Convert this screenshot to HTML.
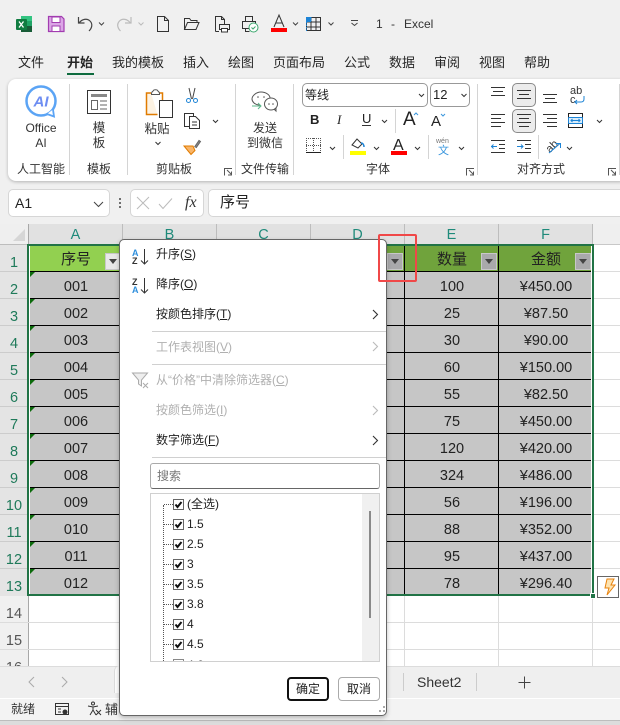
<!DOCTYPE html>
<html><head><meta charset="utf-8">
<style>
html,body{margin:0;padding:0}
body{width:620px;height:725px;overflow:hidden;position:relative;background:#f0f0f0;font-family:"Liberation Sans","Noto Sans CJK SC",sans-serif;color:#222}
div,span{position:absolute;box-sizing:border-box}
.t{white-space:nowrap;font-size:12px;line-height:16px}
.c{text-align:center}
.tab{top:55px;font-size:13px;line-height:16px;white-space:nowrap;color:#262626}
.gl{top:161px;font-size:12px;line-height:16px;white-space:nowrap;color:#333}
.cell{height:26px;line-height:28px;margin-top:1px;padding-left:1px;text-align:center;font-size:14.5px;color:#222;white-space:nowrap}
.hl{background:#000;height:1px;left:30px;width:561px}
.vl{background:#000;width:1px;top:245px;height:350px}
.rn{left:0;width:28px;text-align:center;font-size:14.5px;height:27px;line-height:27px;margin-top:1px;color:#1f7a5a}
.ch{top:224px;height:20px;width:94px;text-align:center;font-size:14.5px;line-height:23px;color:#1f8a7a;background:#e1e1e1;border-right:1px solid #bdbdbd}
.m{left:156px;font-size:12px;line-height:16px;white-space:nowrap;color:#222}
.g{color:#b0b0b0}
.li{left:187px;font-size:12px;line-height:16px;white-space:nowrap;color:#222}
.cb{left:173px;width:11px;height:11px;border:1px solid #666;background:#fff}
.fb{width:16px;height:17px;top:253px;background:#a9a9ab;border:1px solid #c8c8c8}
.fb:after{content:"";position:absolute;left:3px;top:5px;border:4px solid transparent;border-top:5px solid #444}
</style></head><body>

<!-- ribbon card -->
<div style="left:8px;top:79px;width:620px;height:102px;background:#fff;border-radius:8px;box-shadow:0 1px 3px rgba(0,0,0,.25)"></div>

<!-- tabs -->
<div class="tab" style="left:18px">文件</div>
<div class="tab" style="left:67px;font-weight:bold">开始</div>
<div style="left:67px;top:73px;width:27px;height:2px;background:#0e6b3e"></div>
<div class="tab" style="left:112px">我的模板</div>
<div class="tab" style="left:183px">插入</div>
<div class="tab" style="left:228px">绘图</div>
<div class="tab" style="left:273px">页面布局</div>
<div class="tab" style="left:344px">公式</div>
<div class="tab" style="left:389px">数据</div>
<div class="tab" style="left:434px">审阅</div>
<div class="tab" style="left:479px">视图</div>
<div class="tab" style="left:524px">帮助</div>
<div class="t" style="left:376px;top:16px;font-size:12px;color:#333">1</div>
<div class="t" style="left:391px;top:16px;font-size:12px;color:#333">-</div>
<div class="t" style="left:404px;top:16px;font-size:12px;color:#333">Excel</div>

<!-- ribbon text -->
<div class="t c" style="left:16px;width:50px;top:121px;line-height:15px;color:#333">Office<br>AI</div>
<div class="t c" style="left:86px;width:26px;top:121px;line-height:15px;color:#333;font-size:12.5px">模<br>板</div>
<div class="t c" style="left:140px;width:34px;top:121px;color:#333;font-size:12.5px">粘贴</div>
<div class="t c" style="left:240px;width:50px;top:121px;line-height:15px;color:#333;font-size:12px">发送<br>到微信</div>
<div class="gl" style="left:17px">人工智能</div>
<div class="gl" style="left:87px">模板</div>
<div class="gl" style="left:156px">剪贴板</div>
<div class="gl" style="left:241px">文件传输</div>
<div class="gl" style="left:366px">字体</div>
<div class="gl" style="left:517px">对齐方式</div>

<!-- font boxes -->
<div style="left:302px;top:83px;width:126px;height:24px;border:1px solid #999;border-radius:5px"></div>
<div style="left:430px;top:83px;width:40px;height:24px;border:1px solid #999;border-radius:5px"></div>
<div class="t" style="left:305px;top:87px;font-size:12px">等线</div>
<div class="t" style="left:433px;top:87px;font-size:13px">12</div>
<div class="t" style="left:310px;top:112px;font-size:13px;font-weight:bold">B</div>
<div class="t" style="left:337px;top:112px;font-size:13px;font-style:italic;font-family:'Liberation Serif',serif">I</div>
<div class="t" style="left:362px;top:111px;font-size:13px">U</div>
<div class="t" style="left:403px;top:109px;font-size:19px;line-height:22px">A</div>
<div class="t" style="left:431px;top:113px;font-size:15px;line-height:18px">A</div>
<div class="t" style="left:393px;top:137px;font-size:16px;line-height:18px">A</div>
<div class="t" style="left:436px;top:137px;font-size:7px;line-height:9px;color:#777">wén</div>
<div class="t" style="left:438px;top:145px;font-size:11px;line-height:12px;color:#3a96dd">文</div>
<div class="t" style="left:570px;top:87px;font-size:11px;line-height:9px;color:#333">ab<br>c</div>
<!-- active align buttons -->
<div style="left:512px;top:83px;width:24px;height:24px;background:#ececec;border:1px solid #8a8a8a;border-radius:5px"></div>
<div style="left:512px;top:109px;width:24px;height:24px;background:#ececec;border:1px solid #8a8a8a;border-radius:5px"></div>

<!-- formula bar -->
<div style="left:8px;top:189px;width:102px;height:28px;background:#fff;border:1px solid #d6d6d6;border-radius:5px"></div>
<div class="t" style="left:15px;top:195px;font-size:14px">A1</div>
<div style="left:130px;top:189px;width:74px;height:28px;background:#fff;border:1px solid #d6d6d6;border-radius:5px"></div>
<div class="t" style="left:185px;top:194px;font-size:16px;line-height:18px;font-style:italic;font-family:'Liberation Serif',serif;color:#333">fx</div>
<div style="left:208px;top:189px;width:420px;height:28px;background:#fff;border:1px solid #d6d6d6;border-radius:5px"></div>
<div class="t" style="left:220px;top:194px;font-size:15px;line-height:18px">序号</div>

<!-- sheet area -->
<div style="left:0;top:224px;width:620px;height:442px;background:#fff"></div>
<div style="left:0;top:224px;width:620px;height:20px;background:#efefef"></div>
<div style="left:0;top:244px;width:28px;height:422px;background:#f0f0f0"></div>
<div style="left:594px;top:244px;width:26px;height:1px;background:#c8c8c8"></div>
<div style="left:0;top:244px;width:593px;height:1px;background:#bdbdbd"></div>
<div style="left:28px;top:224px;width:1px;height:442px;background:#a8a8a8"></div>
<div class="ch" style="left:29px">A</div>
<div class="ch" style="left:123px">B</div>
<div class="ch" style="left:217px">C</div>
<div class="ch" style="left:311px">D</div>
<div class="ch" style="left:405px">E</div>
<div class="ch" style="left:499px">F</div>
<!-- row header -->
<div style="left:0;top:245px;width:28px;height:351px;background:#e4e4e4"></div>
<div class="rn" style="top:249px">1</div><div class="rn" style="top:276px">2</div><div class="rn" style="top:303px">3</div><div class="rn" style="top:330px">4</div><div class="rn" style="top:357px">5</div><div class="rn" style="top:384px">6</div><div class="rn" style="top:411px">7</div><div class="rn" style="top:438px">8</div><div class="rn" style="top:465px">9</div><div class="rn" style="top:492px">10</div><div class="rn" style="top:519px">11</div><div class="rn" style="top:546px">12</div><div class="rn" style="top:573px">13</div>
<div class="rn" style="top:600px;color:#555">14</div><div class="rn" style="top:627px;color:#555">15</div><div class="rn" style="top:654px;color:#555">16</div>
<!-- grid -->
<div style="left:0;top:271px;width:28px;height:1px;background:#ccc"></div><div style="left:0;top:298px;width:28px;height:1px;background:#ccc"></div><div style="left:0;top:325px;width:28px;height:1px;background:#ccc"></div><div style="left:0;top:352px;width:28px;height:1px;background:#ccc"></div><div style="left:0;top:379px;width:28px;height:1px;background:#ccc"></div><div style="left:0;top:406px;width:28px;height:1px;background:#ccc"></div><div style="left:0;top:433px;width:28px;height:1px;background:#ccc"></div><div style="left:0;top:460px;width:28px;height:1px;background:#ccc"></div><div style="left:0;top:487px;width:28px;height:1px;background:#ccc"></div><div style="left:0;top:514px;width:28px;height:1px;background:#ccc"></div><div style="left:0;top:541px;width:28px;height:1px;background:#ccc"></div><div style="left:0;top:568px;width:28px;height:1px;background:#ccc"></div><div style="left:0;top:622px;width:620px;height:1px;background:#dcdcdc"></div><div style="left:0;top:649px;width:620px;height:1px;background:#dcdcdc"></div>
<div style="left:404px;top:596px;width:1px;height:70px;background:#dcdcdc"></div><div style="left:498px;top:596px;width:1px;height:70px;background:#dcdcdc"></div><div style="left:592px;top:596px;width:1px;height:70px;background:#dcdcdc"></div>
<div style="left:593px;top:271px;width:27px;height:1px;background:#dcdcdc"></div><div style="left:593px;top:298px;width:27px;height:1px;background:#dcdcdc"></div><div style="left:593px;top:325px;width:27px;height:1px;background:#dcdcdc"></div><div style="left:593px;top:352px;width:27px;height:1px;background:#dcdcdc"></div><div style="left:593px;top:379px;width:27px;height:1px;background:#dcdcdc"></div><div style="left:593px;top:406px;width:27px;height:1px;background:#dcdcdc"></div><div style="left:593px;top:433px;width:27px;height:1px;background:#dcdcdc"></div><div style="left:593px;top:460px;width:27px;height:1px;background:#dcdcdc"></div><div style="left:593px;top:487px;width:27px;height:1px;background:#dcdcdc"></div><div style="left:593px;top:514px;width:27px;height:1px;background:#dcdcdc"></div><div style="left:593px;top:541px;width:27px;height:1px;background:#dcdcdc"></div><div style="left:593px;top:568px;width:27px;height:1px;background:#dcdcdc"></div>

<!-- data -->
<div style="left:30px;top:246px;width:561px;height:348px;background:#c6c6c6"></div>
<div style="left:30px;top:246px;width:93px;height:25px;background:#92d050"></div>
<div style="left:123px;top:246px;width:468px;height:25px;background:#70a33c"></div>
<div class="vl" style="left:122px"></div><div class="vl" style="left:216px"></div><div class="vl" style="left:310px"></div><div class="vl" style="left:404px"></div><div class="vl" style="left:498px"></div>
<div class="hl" style="top:271px"></div><div class="hl" style="top:298px"></div><div class="hl" style="top:325px"></div><div class="hl" style="top:352px"></div><div class="hl" style="top:379px"></div><div class="hl" style="top:406px"></div><div class="hl" style="top:433px"></div><div class="hl" style="top:460px"></div><div class="hl" style="top:487px"></div><div class="hl" style="top:514px"></div><div class="hl" style="top:541px"></div><div class="hl" style="top:568px"></div>

<div class="cell" style="left:29px;width:93px;top:245px;font-size:15px">序号</div>
<div class="cell" style="left:405px;width:93px;top:245px;font-size:15px">数量</div>
<div class="cell" style="left:499px;width:93px;top:245px;font-size:15px">金额</div>
<div class="fb" style="left:105px;background:#e8e8e8"></div>
<div class="fb" style="left:387px"></div><div class="fb" style="left:481px"></div><div class="fb" style="left:575px"></div>

<div class="cell" style="left:29px;width:93px;top:272px">001</div><div class="cell" style="left:405px;width:93px;top:272px">100</div><div class="cell" style="left:499px;width:93px;top:272px">¥450.00</div>
<div class="cell" style="left:29px;width:93px;top:299px">002</div><div class="cell" style="left:405px;width:93px;top:299px">25</div><div class="cell" style="left:499px;width:93px;top:299px">¥87.50</div>
<div class="cell" style="left:29px;width:93px;top:326px">003</div><div class="cell" style="left:405px;width:93px;top:326px">30</div><div class="cell" style="left:499px;width:93px;top:326px">¥90.00</div>
<div class="cell" style="left:29px;width:93px;top:353px">004</div><div class="cell" style="left:405px;width:93px;top:353px">60</div><div class="cell" style="left:499px;width:93px;top:353px">¥150.00</div>
<div class="cell" style="left:29px;width:93px;top:380px">005</div><div class="cell" style="left:405px;width:93px;top:380px">55</div><div class="cell" style="left:499px;width:93px;top:380px">¥82.50</div>
<div class="cell" style="left:29px;width:93px;top:407px">006</div><div class="cell" style="left:405px;width:93px;top:407px">75</div><div class="cell" style="left:499px;width:93px;top:407px">¥450.00</div>
<div class="cell" style="left:29px;width:93px;top:434px">007</div><div class="cell" style="left:405px;width:93px;top:434px">120</div><div class="cell" style="left:499px;width:93px;top:434px">¥420.00</div>
<div class="cell" style="left:29px;width:93px;top:461px">008</div><div class="cell" style="left:405px;width:93px;top:461px">324</div><div class="cell" style="left:499px;width:93px;top:461px">¥486.00</div>
<div class="cell" style="left:29px;width:93px;top:488px">009</div><div class="cell" style="left:405px;width:93px;top:488px">56</div><div class="cell" style="left:499px;width:93px;top:488px">¥196.00</div>
<div class="cell" style="left:29px;width:93px;top:515px">010</div><div class="cell" style="left:405px;width:93px;top:515px">88</div><div class="cell" style="left:499px;width:93px;top:515px">¥352.00</div>
<div class="cell" style="left:29px;width:93px;top:542px">011</div><div class="cell" style="left:405px;width:93px;top:542px">95</div><div class="cell" style="left:499px;width:93px;top:542px">¥437.00</div>
<div class="cell" style="left:29px;width:93px;top:569px">012</div><div class="cell" style="left:405px;width:93px;top:569px">78</div><div class="cell" style="left:499px;width:93px;top:569px">¥296.40</div>

<!-- selection border -->
<div style="left:27px;top:244px;width:567px;height:352px;border:2px solid #217346"></div>

<!-- sheet bar -->
<div style="left:0;top:666px;width:620px;height:32px;background:#efefef;border-top:1px solid #dcdcdc"></div>
<div style="left:114px;top:666px;width:8px;height:27px;background:#fff;border-left:1px solid #dcdcdc;border-top-left-radius:5px"></div>
<div style="left:0;top:698px;width:620px;height:22px;background:#f3f3f3;border-top:1px solid #fff"></div>
<div style="left:0;top:720px;width:620px;height:5px;background:#dcdcdc;border-top:1px solid #bdbdbd"></div>
<div class="t" style="left:417px;top:674px;font-size:14px;color:#333">Sheet2</div>
<div style="left:403px;top:673px;width:1px;height:18px;background:#ccc"></div>
<div style="left:476px;top:673px;width:1px;height:18px;background:#ccc"></div>
<div class="t" style="left:11px;top:701px;color:#333">就绪</div>
<div class="t" style="left:105px;top:702px;color:#333;font-size:13px">辅</div>

<!-- lightning button -->
<div style="left:597px;top:576px;width:22px;height:22px;background:#fff;border:1px solid #666"></div>
<div style="left:590px;top:593px;width:6px;height:6px;background:#217346;border:1px solid #fff"></div>

<!-- big icon layer -->
<svg style="position:absolute;left:0;top:0" width="620" height="725" viewBox="0 0 620 725" fill="none" stroke="#333" stroke-width="1">
<!-- excel -->
<rect x="21" y="16" width="11" height="16" fill="#21a366" stroke="none"/><rect x="21" y="16" width="11" height="5" fill="#33c481" stroke="none"/><rect x="21" y="26" width="11" height="6" fill="#185c37" stroke="none"/>
<rect x="16" y="19" width="11" height="11" rx="1" fill="#107c41" stroke="none"/><path d="M19 21.500l4.500 6M23.500 21.500l-4.500 6" stroke="#fff" stroke-width="1.300"/>
<!-- save -->
<path d="M48.500 16.500h13l2.500 2.500v12.500h-15.500z" fill="#dba6e6" stroke="#a23cb0" stroke-width="1.200"/><rect x="52" y="17" width="8" height="5.500" fill="#fff" stroke="#a23cb0"/><rect x="52" y="26" width="8" height="5.500" fill="#fff" stroke="#a23cb0"/>
<!-- undo redo -->
<path d="M78.500 17v6h6M79 23c3-4 8-5 11-2 3 3 2 7-1 10" stroke="#444" stroke-width="1.200"/>
<path d="M99 22.500l2.500 2.500 2.500-2.500" stroke="#444"/><path d="M138.500 22.500l2.500 2.500 2.500-2.500" stroke="#bbb"/>
<path d="M131 17v6h-6M130.500 23c-3-4-8-5-11-2-3 3-2 7 1 10" stroke="#bbb" stroke-width="1.200"/>
<!-- new -->
<path d="M157.500 16.500h7l4 4v11h-11zM164.500 16.500v4h4" stroke="#333"/>
<!-- open -->
<path d="M184.500 29.500v-11h5l1.500 2h6v2M184.500 29.500l3-7h11.500l-3 7z" stroke="#333"/>
<!-- preview -->
<path d="M215.500 31.500v-15h6l3 3v5M221.500 16.500v3h3M219 31.500h-3.500" stroke="#333"/><rect x="219.500" y="24.500" width="10" height="5" stroke="#333"/><rect x="221.500" y="28.500" width="6" height="3.500" fill="#fff" stroke="#333"/>
<!-- print check -->
<rect x="242.500" y="21.500" width="13" height="7" stroke="#333"/><path d="M245.500 21.500v-5h7v5M245.500 28.500v3h4" stroke="#333"/><circle cx="253.500" cy="27.500" r="4.500" fill="#fff" stroke="#3aa76d"/><path d="M251.500 27.500l1.500 1.500 2.500-2.500" stroke="#3aa76d"/>
<!-- font color A qat -->
<path d="M274 27l5-12 5 12M275.800 23h6.400" stroke="#333"/><rect x="271" y="28" width="16" height="4" fill="#f00" stroke="none"/>
<path d="M293 22.500l2.500 2.500 2.500-2.500M328.500 22.500l2.500 2.500 2.500-2.500" stroke="#444"/>
<!-- table -->
<rect x="306.500" y="17.500" width="14" height="13" stroke="#333"/><path d="M311 17v14M316 17v14M306 22h15M306 27h15" stroke="#333"/><rect x="306" y="17" width="5" height="5" fill="#1d84d6" stroke="none"/><path d="M306.500 22v9M311 17v5" stroke="#1d84d6" stroke-dasharray="1.500 1"/>
<path d="M351 20.500h7M351.500 23l3 2.500 3-2.500" stroke="#444"/>

<!-- separators -->
<g stroke="#d4d4d4"><path d="M69.500 84v91M127.500 84v91M235.500 84v91M293.500 84v91M477.500 84v91M619.500 84v91M395.500 109v24M343.500 135v24M428.500 135v24M538.500 135v24"/></g>

<!-- AI logo -->
<circle cx="41" cy="101" r="14.500" stroke="#5ba4f5" stroke-width="2.500"/><path d="M47 114l7 2.500-1-7" fill="#fff" stroke="#5ba4f5" stroke-width="1.800"/>
<text x="41" y="106.500" text-anchor="middle" font-family="Liberation Sans" font-size="15" font-weight="bold" font-style="italic" fill="#6d8df2" stroke="none">AI</text>
<!-- template -->
<rect x="87.500" y="90.500" width="23" height="23" stroke="#333" stroke-width="1"/><rect x="91" y="94" width="16" height="3" fill="#888" stroke="none"/><rect x="91.500" y="100.500" width="6" height="9" stroke="#666"/><path d="M100 101h7M100 105h7M100 109h7" stroke="#666"/>
<!-- paste -->
<path d="M151 93h-4.500v21.500h11" fill="#fdf3e3" stroke="#e07b00" stroke-width="1.500"/><path d="M153 93h5l1 0h3.500v7" stroke="#e07b00" stroke-width="1.500"/><path d="M151.500 93.500c0-2 2-2.500 2-3 0-1 4-1 4 0 0 .5 2 1 2 3v1h-8z" fill="#fff" stroke="#555"/><rect x="159.500" y="100.500" width="13" height="17" fill="#fff" stroke="#333"/>
<path d="M155.500 142l2.500 2.500 2.500-2.500M213 120l2.500 2.500 2.500-2.500" stroke="#333"/>
<!-- scissors -->
<path d="M189 88l2.500 11M195 88l-2.500 11" stroke="#444"/><circle cx="188.500" cy="100.500" r="2" stroke="#1d84d6"/><circle cx="195.500" cy="100.500" r="2" stroke="#1d84d6"/>
<!-- copy -->
<path d="M189.500 126.500h-5v-13h9v3" stroke="#333"/><path d="M189.500 116.500h6l4 4v8h-10zM192 122h5M192 125h5" stroke="#333"/>
<!-- brush -->
<path d="M193 146l-9 0 7 8.500 4-4z" fill="#f9b568" stroke="#e07b00"/><path d="M194.500 147l4.500-6.500 1.500 1-4.500 6.500" fill="#888" stroke="#666"/>
<!-- wechat -->
<path d="M260 105c-6 0-8-4-8-6 0-3 4-7 9-7s9 3 9 6" stroke="#555"/><ellipse cx="271" cy="104" rx="6.500" ry="6" fill="#fff" stroke="#555"/><path d="M274 109l2 2v-3" stroke="#555"/><path d="M252 106h9M258 103l3 3-3 3" stroke="#5cb88b"/><g fill="#555" stroke="none"><circle cx="258" cy="97" r=".8"/><circle cx="264" cy="97" r=".8"/><circle cx="269" cy="104" r=".8"/><circle cx="273" cy="104" r=".8"/></g>
<!-- launchers -->
<g stroke="#555"><path d="M224.500 175.500v-7h7.500M227 170l4.500 4.500M231.500 171.500v3.500h-3.500M466.500 175.500v-7h7.500M469 170l4.500 4.500M473.500 171.500v3.500h-3.500M608.500 175.500v-7h7.500M611 170l4.500 4.500M615.500 171.500v3.500h-3.500"/></g>
<!-- font chevs -->
<g stroke="#333"><path d="M419 94l2.500 2.500 2.500-2.500M461.500 94l2.500 2.500 2.500-2.500M382 120l2.500 2.500 2.500-2.500M330 147l2.500 2.500 2.500-2.500M374 147l2.500 2.500 2.500-2.500M415 147l2.500 2.500 2.500-2.500M459 147l2.500 2.500 2.500-2.500M597 120l2.500 2.500 2.500-2.500M567 147l2.500 2.500 2.500-2.500"/></g>
<path d="M362 125.500h9" stroke="#333"/>
<path d="M414 115l2-2 2 2M441 114l2 2 2-2" stroke="#3a96dd"/>
<!-- borders icon -->
<path d="M306 152.500h15" stroke="#222"/><path d="M306.500 138v14M320.500 138v14M306 138.500h15M306 145.500h15M313.500 138v14" stroke="#555" stroke-dasharray="1 1"/>
<!-- bucket -->
<path d="M352 145l5-6 5 5-4 4z" stroke="#333"/><path d="M361 143c2 0 3 2 3 4" stroke="#1d84d6" stroke-width="1.500"/>
<rect x="350" y="151" width="16" height="4" fill="#ff0" stroke="none"/>
<rect x="391" y="151" width="16" height="4" fill="#f00" stroke="none"/>
<!-- align icons -->
<g stroke="#333"><path d="M491 87.500h14M493 91.500h10M491 95.500h14M517 90.500h14M519 94.500h10M517 98.500h14M543 94.500h14M545 98.500h10M543 102.500h14"/>
<path d="M491 114.500h14M491 118.500h10M491 122.500h14M491 126.500h10M517 114.500h14M519 118.500h10M517 122.500h14M519 126.500h10M543 114.500h14M547 118.500h10M543 122.500h14M547 126.500h10"/>
<path d="M491 140.500h14M499 144.500h6M499 148.500h6M491 152.500h14M517 140.500h14M525 144.500h6M525 148.500h6M517 152.500h14"/></g>
<path d="M497 146.500h-6M493.500 144.500l-2 2 2 2M517 146.500h6M521 144.500l2 2-2 2" stroke="#1d84d6"/>
<path d="M584 96v3c0 2-1 3-3 3h-6M577 100l-2 2 2 2" stroke="#1d84d6"/>
<!-- merge -->
<rect x="569" y="117" width="13" height="7" fill="#d8ecfa" stroke="none"/><rect x="568.500" y="113.500" width="14" height="14" stroke="#222"/><path d="M568.500 117.500h14M568.500 123.500h14M568.500 117.500v6M582.500 117.500v6" stroke="#1d84d6"/><path d="M571 120.500h9M572.500 119l-1.500 1.500 1.500 1.500M578.500 119l1.500 1.500-1.500 1.500" stroke="#1d84d6"/>
<!-- orientation -->
<text x="545" y="151" transform="rotate(-45 550 146)" font-family="Liberation Sans" font-size="11" fill="#333" stroke="none">ab</text>
<path d="M549 153l11-9.500M555.500 143.500h5v4.500" stroke="#1d84d6"/>
<!-- name box chevron -->
<path d="M94 202l4.500 4.500 4.500-4.500" stroke="#444"/>
<g fill="#444" stroke="none"><circle cx="120" cy="199" r="1"/><circle cx="120" cy="203" r="1"/><circle cx="120" cy="207" r="1"/></g>
<path d="M137 197l12 12M149 197l-12 12" stroke="#bbb"/><path d="M159 204l4 4.500 9-10" stroke="#bbb"/>
<!-- corner triangle -->
<path d="M25 229v12H13z" fill="#d6d6d6" stroke="none"/>
<!-- green triangles -->
<g fill="#0b6a0b" stroke="none"><path d="M30 272h5l-5 5zM30 299h5l-5 5zM30 326h5l-5 5zM30 353h5l-5 5zM30 380h5l-5 5zM30 407h5l-5 5zM30 434h5l-5 5zM30 461h5l-5 5zM30 488h5l-5 5zM30 515h5l-5 5zM30 542h5l-5 5zM30 569h5l-5 5z"/></g>
<!-- lightning -->
<path d="M607 579h7l-3 6h4l-8 10 2-7h-4z" fill="#fde3b0" stroke="#e8820c"/>
<!-- sheet nav -->
<path d="M34 677l-5 5 5 5M62 677l5 5-5 5" stroke="#aaa"/>
<path d="M518.500 682.500h12M524.500 676.500v12" stroke="#444"/>
<!-- status icons -->
<rect x="55.500" y="703.500" width="13" height="11" stroke="#333"/><path d="M55.500 706.500h13M58 709h3M58 712h3" stroke="#333"/><circle cx="65" cy="712" r="2.500" fill="#333" stroke="none"/>
<circle cx="93" cy="703.500" r="1.500" stroke="#333"/><path d="M88 706l5 1 5-1M93 707v3l-3 5M93 710l3 5" stroke="#333"/><path d="M96 710l5 5M101 710l-5 5" stroke="#333"/>
</svg>

<!-- red box -->
<div style="left:378px;top:234px;width:39px;height:48px;border:2px solid #f04848;border-radius:2px;z-index:5"></div>

<!-- filter menu -->
<div style="left:119px;top:239px;width:268px;height:477px;background:#fff;border:1px solid #666;border-radius:5px;box-shadow:0 2px 5px rgba(0,0,0,.25);z-index:2"></div>
<div style="left:0;top:0;width:620px;height:725px;z-index:4">
<div class="m" style="top:246px">升序(<u>S</u>)</div>
<div class="m" style="top:276px">降序(<u>O</u>)</div>
<div class="m" style="top:306px">按颜色排序(<u>T</u>)</div>
<div class="m g" style="top:339px">工作表视图(<u>V</u>)</div>
<div class="m g" style="top:372px">从“价格”中清除筛选器(<u>C</u>)</div>
<div class="m g" style="top:402px">按颜色筛选(<u>I</u>)</div>
<div class="m" style="top:432px">数字筛选(<u>F</u>)</div>
<div style="left:152px;top:331px;width:234px;height:1px;background:#d0d0d0"></div>
<div style="left:152px;top:364px;width:234px;height:1px;background:#d0d0d0"></div>
<div style="left:152px;top:457px;width:234px;height:1px;background:#d0d0d0"></div>
<div style="left:150px;top:463px;width:230px;height:26px;border:1px solid #aaa;border-bottom:1px solid #666;border-radius:3px"></div>
<div class="t" style="left:157px;top:468px;color:#777">搜索</div>
<div style="left:150px;top:493px;width:230px;height:169px;border:1px solid #d0d0d0;overflow:hidden">
  <div style="left:211px;top:0;width:18px;height:167px;background:#f0f0f0"></div>
  <div style="left:218px;top:17px;width:2px;height:107px;background:#8a8a8a"></div>
  <div style="left:12px;top:11px;width:0;height:170px;border-left:1px dotted #555"></div>
  <div style="left:13px;top:10px;width:9px;height:0;border-top:1px dotted #555"></div>
  <div style="left:13px;top:30px;width:9px;height:0;border-top:1px dotted #555"></div>
  <div style="left:13px;top:50px;width:9px;height:0;border-top:1px dotted #555"></div>
  <div style="left:13px;top:70px;width:9px;height:0;border-top:1px dotted #555"></div>
  <div style="left:13px;top:90px;width:9px;height:0;border-top:1px dotted #555"></div>
  <div style="left:13px;top:110px;width:9px;height:0;border-top:1px dotted #555"></div>
  <div style="left:13px;top:130px;width:9px;height:0;border-top:1px dotted #555"></div>
  <div style="left:13px;top:150px;width:9px;height:0;border-top:1px dotted #555"></div>
  <div style="left:22px;top:165px;width:11px;height:11px;border:1px solid #888"></div>
  <div style="left:36px;top:163px;font-size:12px;line-height:16px;white-space:nowrap">4.6</div>
</div>
<div class="cb" style="top:499px"></div><div class="cb" style="top:519px"></div><div class="cb" style="top:539px"></div><div class="cb" style="top:559px"></div><div class="cb" style="top:579px"></div><div class="cb" style="top:599px"></div><div class="cb" style="top:619px"></div><div class="cb" style="top:639px"></div>
<div class="li" style="top:496px">(全选)</div><div class="li" style="top:516px">1.5</div><div class="li" style="top:536px">2.5</div><div class="li" style="top:556px">3</div><div class="li" style="top:576px">3.5</div><div class="li" style="top:596px">3.8</div><div class="li" style="top:616px">4</div><div class="li" style="top:636px">4.5</div>
<div style="left:287px;top:677px;width:42px;height:24px;border:2px solid #111;border-radius:4px;text-align:center;font-size:12px;line-height:20px;background:#fff">确定</div>
<div style="left:338px;top:677px;width:42px;height:24px;border:1px solid #aaa;border-radius:4px;text-align:center;font-size:12px;line-height:22px;background:#fff">取消</div>
<svg style="position:absolute;left:0;top:0" width="620" height="725" viewBox="0 0 620 725" fill="none">
<!-- sort icons -->
<text x="132" y="256" font-family="Liberation Sans" font-size="9" font-weight="bold" fill="#2f8fdc">A</text>
<text x="132" y="264" font-family="Liberation Sans" font-size="9" font-weight="bold" fill="#333">Z</text>
<path d="M144.500 249v15M141 260.500l3.500 3.500 3.500-3.500" stroke="#333"/>
<text x="132" y="285" font-family="Liberation Sans" font-size="9" font-weight="bold" fill="#333">Z</text>
<text x="132" y="293" font-family="Liberation Sans" font-size="9" font-weight="bold" fill="#2f8fdc">A</text>
<path d="M144.500 278v15M141 289.500l3.500 3.500 3.500-3.500" stroke="#333"/>
<!-- funnel -->
<path d="M132.500 373h15l-6 7v6l-3-2v-4z" stroke="#aaa" fill="#eee"/><path d="M143 383l5 5M148 383l-5 5" stroke="#aaa"/>
<!-- chevrons -->
<path d="M373 310l4.500 4.500-4.500 4.500M373 436l4.500 4.500-4.500 4.500" stroke="#333" stroke-width="1.100"/>
<path d="M373 342l4.500 4.500-4.500 4.500M373 406l4.500 4.500-4.500 4.500" stroke="#bbb" stroke-width="1.100"/>
<!-- checks -->
<g stroke="#111" stroke-width="2"><path d="M175.500 504.500l2 2.500 4-5M175.500 524.500l2 2.500 4-5M175.500 544.500l2 2.500 4-5M175.500 564.500l2 2.500 4-5M175.500 584.500l2 2.500 4-5M175.500 604.500l2 2.500 4-5M175.500 624.500l2 2.500 4-5M175.500 644.500l2 2.500 4-5"/></g>
<!-- grip -->
<g fill="#aaa"><rect x="383" y="706" width="2" height="2"/><rect x="383" y="710" width="2" height="2"/><rect x="379" y="710" width="2" height="2"/></g>
</svg>
</div>
</body></html>
